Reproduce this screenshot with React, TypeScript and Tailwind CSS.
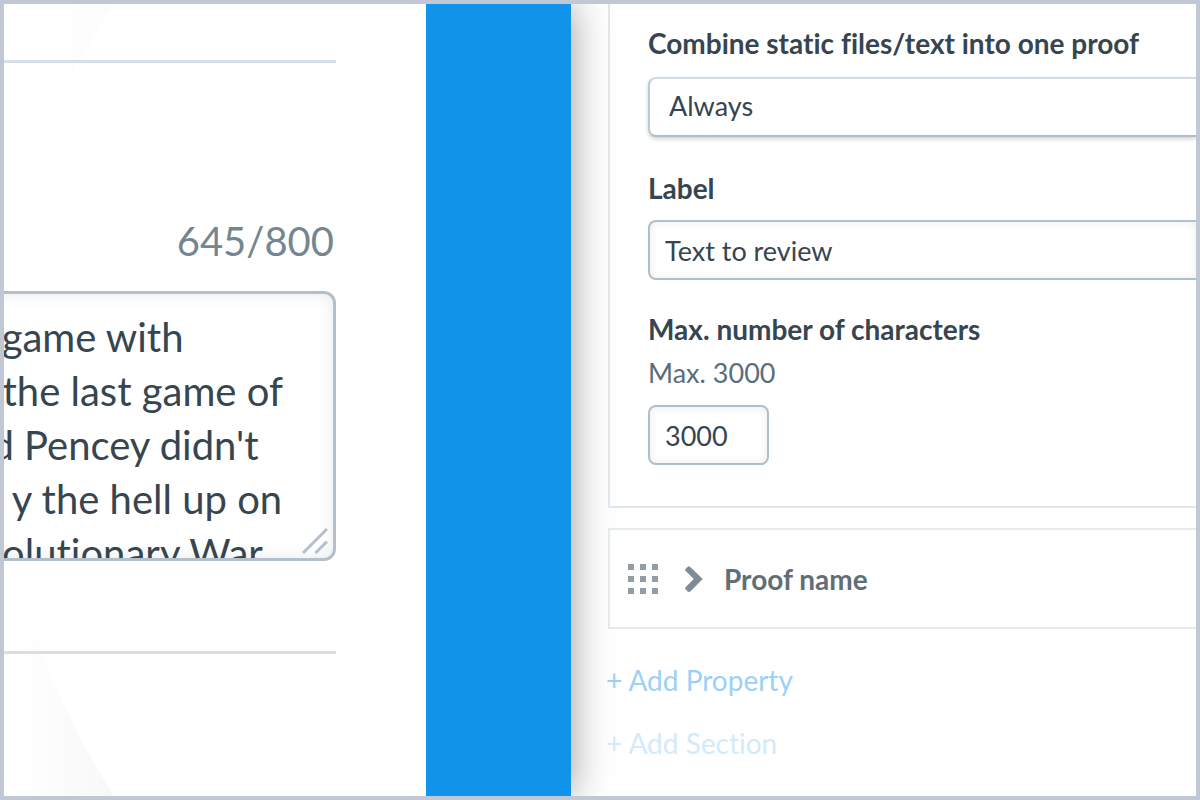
import React from "react";

const reviewText = [
  "l game with",
  "  the last game of",
  "ld Pencey didn't",
  "   y the hell up on",
  "volutionary War",
].join("\n");

const labelClass = "block text-[28px] leading-8 font-bold text-[#36454f]";
const inputClass =
  "block h-[60px] border-2 border-[#afbecb] bg-white px-[15px] text-[27px] text-[#36454f] shadow-[inset_0_0_10px_rgba(0,0,0,0.07)] outline-none";

function Backdrop() {
  return (
    <svg
      className="pointer-events-none absolute inset-y-0 left-0 h-full w-[120px]"
      viewBox="4 4 120 792"
      preserveAspectRatio="none"
      aria-hidden="true"
    >
      <defs>
        <linearGradient id="fadeTop" gradientUnits="userSpaceOnUse" x1="24" y1="0" x2="120" y2="0">
          <stop offset="0" stopColor="#000" stopOpacity="0" />
          <stop offset="1" stopColor="#000" stopOpacity="0.012" />
        </linearGradient>
        <linearGradient id="fadeBottom" gradientUnits="userSpaceOnUse" x1="14" y1="0" x2="116" y2="0">
          <stop offset="0" stopColor="#000" stopOpacity="0" />
          <stop offset="1" stopColor="#000" stopOpacity="0.03" />
        </linearGradient>
      </defs>
      <path d="M4 4H114A725 725 0 0 0 4 300Z" fill="url(#fadeTop)" />
      <path d="M4 500A725 725 0 0 0 114 796H4Z" fill="url(#fadeBottom)" />
    </svg>
  );
}

function ReviewPanel() {
  return (
    <section className="relative z-20 overflow-hidden bg-white pr-[90px]">
      <Backdrop />
      <div className="relative mt-14 border-t-[3px] border-[#d5dfe5] pt-[154px]">
        <label htmlFor="review" className="block pr-0.5 text-right text-[40px] leading-[48px] text-[#748690]">
          645/800
        </label>
        <div className="relative mt-[26px] -ml-[60px]">
          <textarea
            id="review"
            wrap="off"
            defaultValue={reviewText}
            className="block h-[270px] w-full resize-none overflow-hidden rounded-[12px] border-[3px] border-[#b3c0cb] bg-transparent pt-4 pl-[35px] text-[40px] leading-[54px] text-[#36454f] shadow-[inset_0_0_16px_rgba(0,0,0,0.09)] outline-none"
          />
          <svg
            className="pointer-events-none absolute right-[8px] bottom-[7px]"
            width="26"
            height="26"
            viewBox="0 0 26 26"
            fill="none"
            stroke="#b3c0cb"
            strokeWidth="3"
            aria-hidden="true"
          >
            <path d="M1 25L25 1M13.500 25L25 13.500" />
          </svg>
        </div>
      </div>
      <hr className="relative mt-[90px] border-t-[3px] border-[#d5dfe5]" />
    </section>
  );
}

function DragDots() {
  return (
    <svg width="30" height="30" viewBox="0 0 30 30" aria-hidden="true">
      {[0, 12, 24].map((y) =>
        [0, 12, 24].map((x) => (
          <rect key={`${x}-${y}`} x={x} y={y} width="6" height="6" fill="#929ea5" />
        )),
      )}
    </svg>
  );
}

function SettingsPanel() {
  return (
    <section className="relative z-10 min-w-0 overflow-hidden pl-[37px]">
      <div className="border-b-2 border-l-2 border-[#dfe7ed] pt-[23px] pb-[41px] pl-[38px]">
        <label htmlFor="combine" className={`${labelClass} whitespace-nowrap`}>
          Combine static files/text into one proof
        </label>
        <select
          id="combine"
          className="mt-[18px] block h-[60px] w-full appearance-none rounded-l-[8px] border-2 border-r-0 border-t-[#d0dbe3] border-b-[#aebdc8] border-l-[#bccad4] bg-white pb-0.5 pl-[19px] text-[27px] text-[#36454f] shadow-[0_2px_4px_rgba(0,0,0,0.18)] outline-none"
        >
          <option>Always</option>
        </select>
        <label htmlFor="label" className={`${labelClass} mt-[35px]`}>
          Label
        </label>
        <input
          id="label"
          type="text"
          defaultValue="Text to review"
          className={`${inputClass} mt-4 w-full rounded-l-[8px] border-r-0`}
        />
        <label htmlFor="max" className={`${labelClass} mt-[33px]`}>
          Max. number of characters
        </label>
        <p className="mt-3 text-[27px] leading-8 text-[#5a6d7a]">Max. 3000</p>
        <input
          id="max"
          type="text"
          defaultValue="3000"
          className={`${inputClass} mt-4 w-[121px] rounded-[8px]`}
        />
      </div>
      <div className="mt-5 flex h-[101px] items-center border-2 border-r-0 border-[#e4ebef] pl-[18px]">
        <DragDots />
        <button type="button" className="ml-[27px] flex items-center gap-[21px] text-[28px] leading-8 font-bold text-[#626e77]">
          <svg width="18" height="26" viewBox="0 0 18 26" fill="none" aria-hidden="true">
            <path
              d="M3.500 0.500L5 1L17 12.500V13.500L5 25.500L3.500 26L0.500 23V21.500L9 13L0.500 4.500V3Z"
              fill="#7f8c95"
              stroke="#7f8c95"
              strokeWidth="0.500"
              strokeLinejoin="round"
            />
          </svg>
          Proof name
        </button>
      </div>
      <div className="-ml-0.5 flex flex-col items-start gap-[31px] pt-[35px] text-[28px] leading-8">
        <button type="button" className="text-[#9bd1f7]">
          + Add Property
        </button>
        <button type="button" className="text-[#d3eafb]">
          + Add Section
        </button>
      </div>
    </section>
  );
}

export default function App() {
  return (
    <main className="grid min-h-screen grid-cols-[422fr_145fr_625fr] overflow-hidden border-4 border-[#c1c8d3] bg-white font-['Lato',sans-serif] [font-variant-ligatures:none]">
      <ReviewPanel />
      <div className="relative bg-[#1293ea] shadow-[0_0_38px_rgba(0,0,0,0.4)]" />
      <SettingsPanel />
    </main>
  );
}
